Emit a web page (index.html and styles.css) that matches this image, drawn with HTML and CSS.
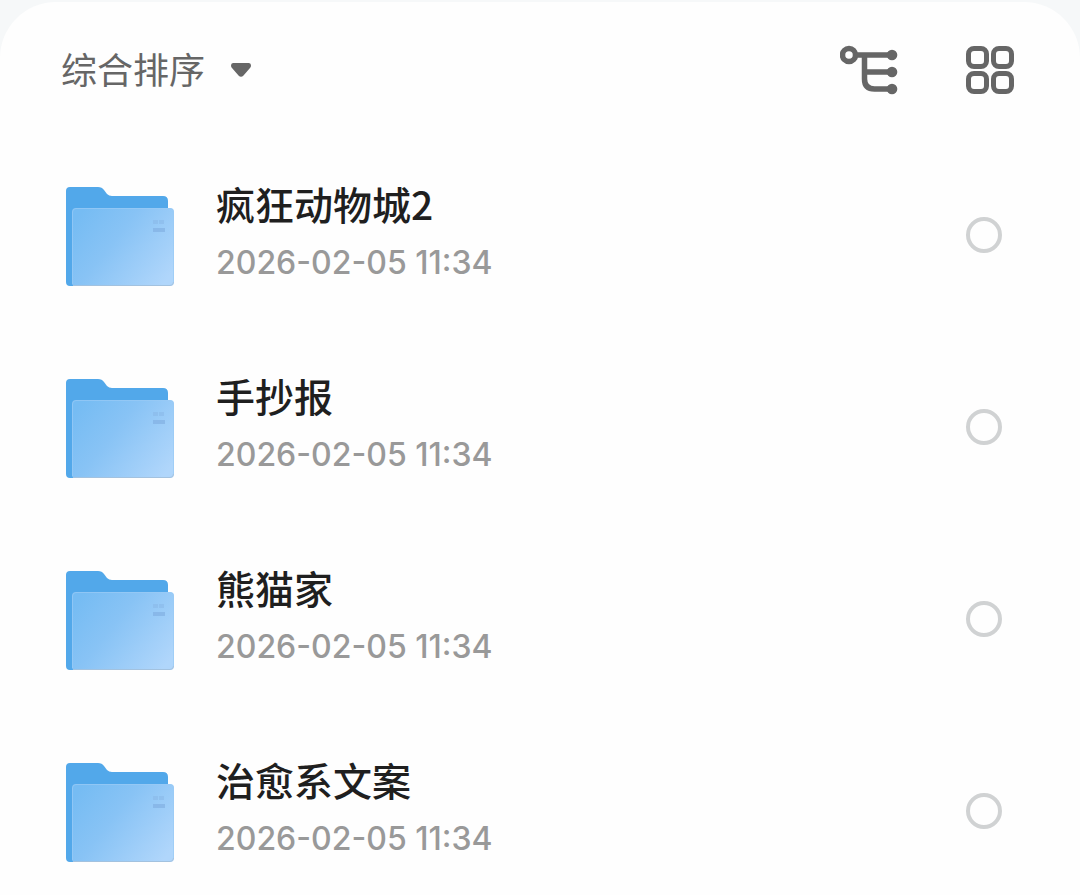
FILE: index.html
```html
<!DOCTYPE html>
<html lang="zh-CN">
<head>
    <meta charset="UTF-8">
    <meta name="viewport" content="width=device-width, initial-scale=1.0">
    <title>文件列表</title>
    <link rel="stylesheet" href="styles.css">
</head>
<body>
    <!-- shared folder icon -->
    <svg class="defs" width="0" height="0" aria-hidden="true">
        <defs>
            <linearGradient id="front" x1="0" y1="0.2" x2="1" y2="0.8">
                <stop offset="0" stop-color="#76bcf3"/>
                <stop offset="0.4" stop-color="#88c3f5"/>
                <stop offset="1" stop-color="#b0d6fb"/>
            </linearGradient>
            <symbol id="folder" viewBox="-1 0 110 100">
                <path fill="#52a8ea" d="M1 5Q1 1 5 1H33Q37 1 39 4L42 8Q44 10 47 10H98Q103 10 103 15V60L20 100H5Q1 100 1 96Z"/>
                <path fill="url(#front)" d="M7 26Q7 22 11 22H105Q109 22 109 26V96Q109 100 105 100H10Q7 100 7 97Z"/>
                <path fill="none" stroke="#9acbf5" stroke-opacity="0.7" d="M7.500 98V26Q7.500 22.500 11 22.500H105Q108.500 22.500 108.500 26V96"/>
                <path fill="none" stroke="#a3c2df" d="M8 99.500H105Q108.500 99.500 108.500 96"/>
                <path fill="#87b5e5" opacity="0.5" d="M88 34h5v4h-5zM94 34h5v4h-5z"/>
                <path fill="#7facdf" opacity="0.6" d="M88 42h12v4H88z"/>
            </symbol>
        </defs>
    </svg>
    <main class="panel">
        <header class="toolbar">
            <button class="sort-button" type="button">
                <span class="sort-label">综合排序</span>
                <svg width="20" height="14" viewBox="0 0 20 14" aria-hidden="true">
                    <path fill="#666" d="M2 0H18Q20 0 20 2.500Q20 4 19 5L12.500 12.500Q10 15 7.500 12.500L1 5Q0 4 0 2.500Q0 0 2 0Z"/>
                </svg>
            </button>
            <div class="view-buttons">
                <button type="button" aria-label="目录树">
                    <svg width="58" height="50" viewBox="0 0 58 50" aria-hidden="true">
                        <g fill="none" stroke="#666" stroke-width="5.500">
                            <circle cx="9" cy="10" r="6.500"/>
                            <path d="M16 10H52M24.500 10V34Q24.500 44 34.500 44H52M24.500 27H52"/>
                        </g>
                        <g fill="#666">
                            <circle cx="52" cy="10" r="5.300"/>
                            <circle cx="52" cy="27" r="5.300"/>
                            <circle cx="52" cy="44" r="5.300"/>
                        </g>
                    </svg>
                </button>
                <button type="button" aria-label="网格视图">
                    <svg width="48" height="48" viewBox="0 0 48 48" aria-hidden="true">
                        <g fill="none" stroke="#666" stroke-width="5">
                            <rect x="2.500" y="2.500" width="18" height="18" rx="5.500"/>
                            <rect x="27.500" y="2.500" width="18" height="18" rx="5.500"/>
                            <rect x="2.500" y="27.500" width="18" height="18" rx="5.500"/>
                            <rect x="27.500" y="27.500" width="18" height="18" rx="5.500"/>
                        </g>
                    </svg>
                </button>
            </div>
        </header>
        <ul class="file-list">
            <li>
                <label class="file">
                    <svg class="folder" aria-hidden="true"><use href="#folder"/></svg>
                    <span class="info">
                        <span class="name">疯狂动物城2</span>
                        <time class="date">2026-02-05 11:34</time>
                    </span>
                    <input type="checkbox" name="file">
                </label>
            </li>
            <li>
                <label class="file">
                    <svg class="folder" aria-hidden="true"><use href="#folder"/></svg>
                    <span class="info">
                        <span class="name">手抄报</span>
                        <time class="date">2026-02-05 11:34</time>
                    </span>
                    <input type="checkbox" name="file">
                </label>
            </li>
            <li>
                <label class="file">
                    <svg class="folder" aria-hidden="true"><use href="#folder"/></svg>
                    <span class="info">
                        <span class="name">熊猫家</span>
                        <time class="date">2026-02-05 11:34</time>
                    </span>
                    <input type="checkbox" name="file">
                </label>
            </li>
            <li>
                <label class="file">
                    <svg class="folder" aria-hidden="true"><use href="#folder"/></svg>
                    <span class="info">
                        <span class="name">治愈系文案</span>
                        <time class="date">2026-02-05 11:34</time>
                    </span>
                    <input type="checkbox" name="file">
                </label>
            </li>
        </ul>
    </main>
</body>
</html>
```
FILE: styles.css
```css
* {
    box-sizing: border-box;
}
body {
    margin: 0;
    padding-top: 2px;
    background-color: #f6f8f9;
    font-family: Inter, "Noto Sans CJK SC", sans-serif;
    color: #1f1f1f;
}
.defs {
    position: absolute;
}
.panel {
    min-height: calc(100vh - 2px);
    padding: 40px 64px 32px;
    background-color: #fefefe;
    border-radius: 56px 56px 0 0;
}
button {
    display: flex;
    align-items: center;
    padding: 0;
    border: none;
    background: none;
    cursor: pointer;
}
.toolbar {
    display: flex;
    justify-content: space-between;
    align-items: center;
    height: 56px;
}
.sort-button {
    gap: 26px;
    margin-left: -3px;
    font-family: "Noto Sans CJK SC", sans-serif;
    font-size: 36px;
    line-height: 48px;
    color: #666;
}
.sort-label {
    padding-bottom: 4px;
}
.view-buttons {
    display: flex;
    align-items: center;
    gap: 68px;
    padding-right: 2px;
}
.file-list {
    display: flex;
    flex-direction: column;
    gap: 92px;
    margin: 88px 0 0;
    padding: 0;
    list-style: none;
}
.file {
    display: flex;
    align-items: center;
    height: 100px;
    cursor: pointer;
}
.folder {
    width: 110px;
    height: 100px;
    margin-right: 42px;
}
.info {
    display: flex;
    flex: 1;
    flex-direction: column;
    gap: 14px;
    padding-bottom: 12px;
}
.name {
    font-family: "Noto Sans CJK SC", sans-serif;
    font-size: 39px;
    font-weight: 500;
    line-height: 52px;
}
.date {
    font-size: 32px;
    font-weight: 500;
    line-height: 40px;
    color: #999;
}
.file input {
    width: 36px;
    height: 36px;
    margin: 0 14px 2px 0;
    border: 4px solid #d0d2d3;
    border-radius: 50%;
    appearance: none;
    cursor: pointer;
}
.file input:checked {
    border-color: #54a9eb;
    background-color: #54a9eb;
}
```
